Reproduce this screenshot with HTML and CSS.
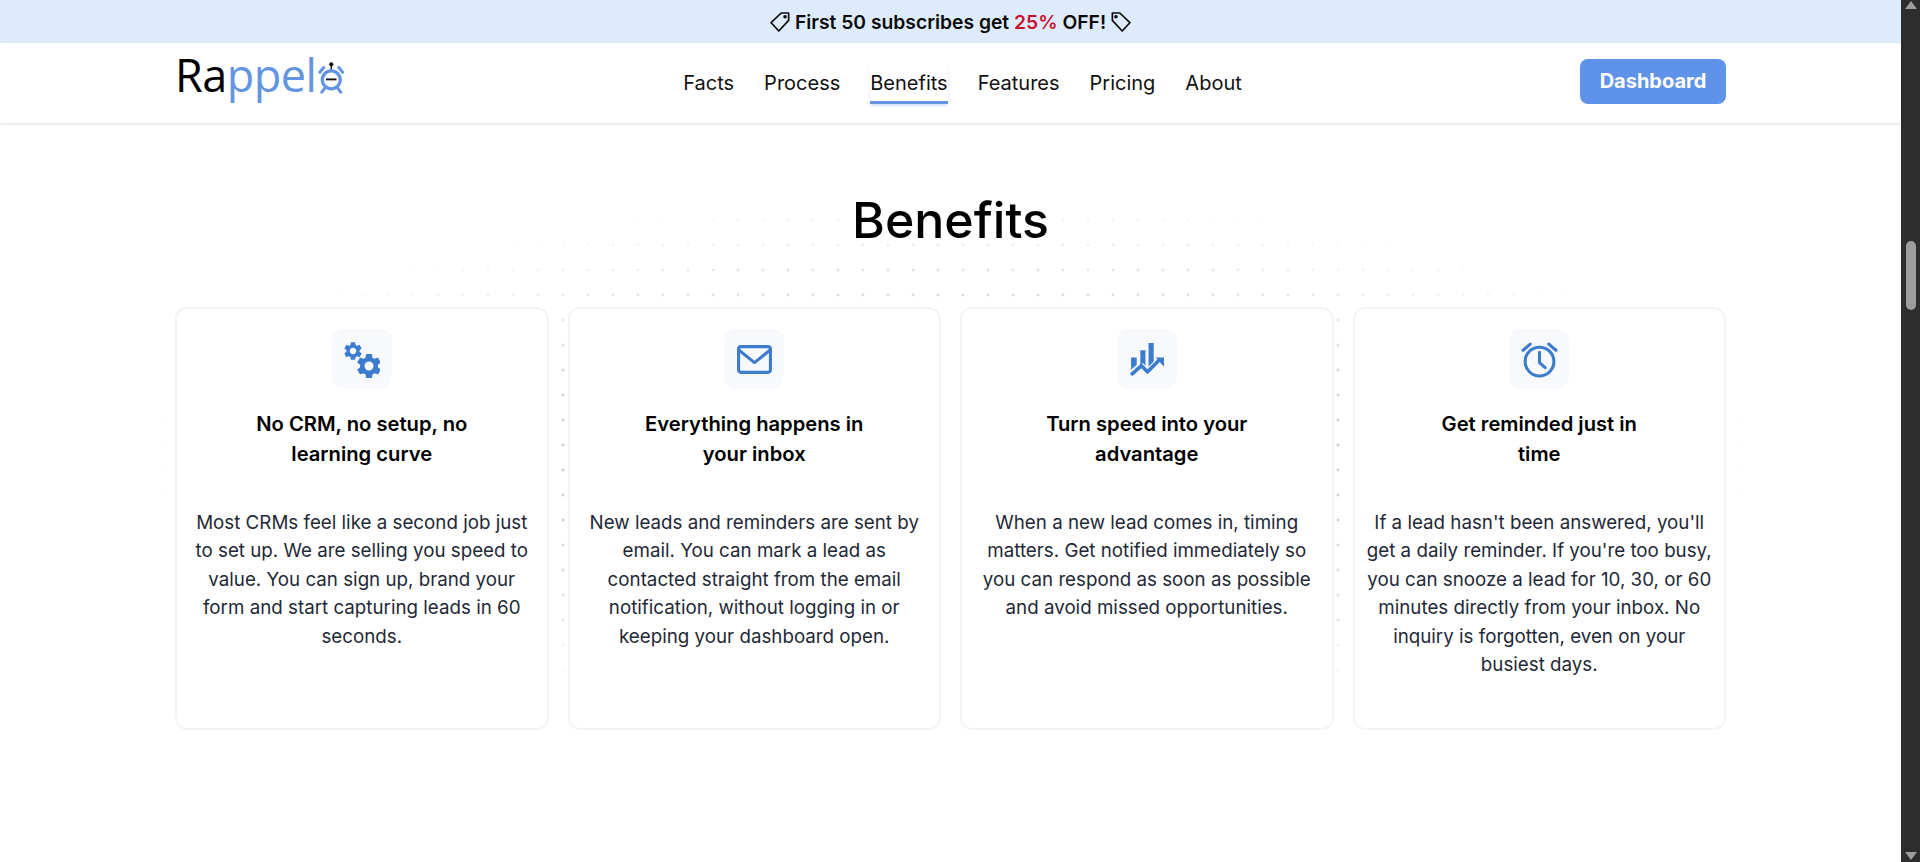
FILE: index.html
```html
<!DOCTYPE html>
<html lang="en">

<head>
    <meta charset="UTF-8">
    <title>Rappelo - Benefits</title>
    <link rel="stylesheet" href="styles.css">
</head>

<body>
    <svg class="defs" width="0" height="0">
        <symbol id="gear" viewBox="0 0 24 24">
            <path fill="currentColor" d="M19.14 12.94c.04-.3.06-.61.06-.94 0-.32-.02-.64-.07-.94l2.03-1.58c.18-.14.23-.41.12-.61l-1.92-3.32c-.12-.22-.37-.29-.59-.22l-2.39.96c-.5-.38-1.03-.7-1.62-.94l-.36-2.54c-.04-.24-.24-.41-.48-.41h-3.84c-.24 0-.43.17-.47.41l-.36 2.54c-.59.24-1.13.57-1.62.94l-2.39-.96c-.22-.08-.47 0-.59.22L2.74 8.87c-.12.21-.08.47.12.61l2.03 1.58c-.05.3-.09.63-.09.94s.02.64.07.94l-2.03 1.58c-.18.14-.23.41-.12.61l1.92 3.32c.12.22.37.29.59.22l2.39-.96c.5.38 1.03.7 1.62.94l.36 2.54c.05.24.24.41.48.41h3.84c.24 0 .44-.17.47-.41l.36-2.54c.59-.24 1.13-.56 1.62-.94l2.39.96c.22.08.47 0 .59-.22l1.92-3.32c.12-.22.07-.47-.12-.61l-2.01-1.58zM12 15.6c-1.98 0-3.6-1.62-3.6-3.6s1.62-3.6 3.6-3.6 3.6 1.62 3.6 3.6-1.62 3.6-3.6 3.6z" />
        </symbol>
    </svg>

    <div class="page">
        <div class="content">
            <div class="promo">
                <svg class="tag" viewBox="0 0 20 20" fill="none" stroke="currentColor" stroke-width="1.4" stroke-linejoin="round">
                    <path d="M11 2.500h6.200v6.200L9 17.500 2.600 10.600z" />
                    <circle cx="14.200" cy="5.600" r=".8" />
                </svg>
                <span>First 50 subscribes get <span class="promo-off">25%</span> OFF!</span>
                <svg class="tag" viewBox="0 0 20 20" fill="none" stroke="currentColor" stroke-width="1.4" stroke-linejoin="round">
                    <path d="M9 2.500H2.800v6.200L11 17.500l6.400-6.900z" />
                    <circle cx="5.800" cy="5.600" r=".8" />
                </svg>
            </div>

            <header class="topbar">
                <div class="topbar-inner">
                    <a class="logo" href="#">Ra<span class="logo-blue">ppel</span><svg class="logo-clock" viewBox="0 0 28 33">
                            <circle cx="14" cy="2.500" r="2.200" fill="#111" />
                            <path d="M14 4v5" stroke="#111" stroke-width="1.500" />
                            <circle cx="14" cy="19" r="9.500" fill="none" stroke="#6495e2" stroke-width="3.400" />
                            <path d="M8.500 18.500h11" stroke="#111" stroke-width="2" />
                            <path d="M2 11l4-5M26 11l-4-5M7 28l-3 4M21 28l3 4" stroke="#6495e2" stroke-width="3.200" stroke-linecap="round" />
                        </svg></a>
                    <nav class="nav">
                        <a href="#">Facts</a>
                        <a href="#">Process</a>
                        <a href="#" class="active">Benefits</a>
                        <a href="#">Features</a>
                        <a href="#">Pricing</a>
                        <a href="#">About</a>
                    </nav>
                    <a class="dash-btn" href="#">Dashboard</a>
                </div>
            </header>

            <section class="benefits">
                <div class="dots"></div>
                <h1>Benefits</h1>
                <div class="cards">
                    <div class="card">
                        <div class="card-icon">
                            <svg viewBox="0 0 37 37">
                                <use href="#gear" x="-1" y="-1" width="22" height="22" />
                                <use href="#gear" x="11" y="10" width="30" height="30" />
                            </svg>
                        </div>
                        <h3>No CRM, no setup, no learning curve</h3>
                        <p>Most CRMs feel like a second job just to set up. We are selling you speed to value. You can sign up, brand your form and start capturing leads in 60 seconds.</p>
                    </div>
                    <div class="card">
                        <div class="card-icon">
                            <svg viewBox="0 0 36 36" fill="none" stroke="currentColor" stroke-width="3" stroke-linejoin="round">
                                <rect x="2.500" y="5.500" width="31" height="25" rx="2.500" />
                                <path d="M3 9l15 12L33 9" />
                            </svg>
                        </div>
                        <h3>Everything happens in your inbox</h3>
                        <p>New leads and reminders are sent by email. You can mark a lead as contacted straight from the email notification, without logging in or keeping your dashboard open.</p>
                    </div>
                    <div class="card">
                        <div class="card-icon">
                            <svg viewBox="0 0 36 36" fill="currentColor">
                                <path d="M3 16h5.500v7L3 28zM12 9h5v15l-2.500-2.500-2.500 2zM20 2h5v18l-5 5zM27 16h8v9z" />
                                <path d="M3 33l10-9 6 6 12-12" fill="none" stroke="currentColor" stroke-width="3.400" />
                            </svg>
                        </div>
                        <h3>Turn speed into your advantage</h3>
                        <p>When a new lead comes in, timing matters. Get notified immediately so you can respond as soon as possible and avoid missed opportunities.</p>
                    </div>
                    <div class="card">
                        <div class="card-icon">
                            <svg viewBox="0 0 36 36" fill="none" stroke="currentColor" stroke-width="3" stroke-linecap="round" stroke-linejoin="round">
                                <circle cx="18" cy="20" r="14" />
                                <path d="M18 11v10l5.500 5M2 9l7-6M34 9l-7-6" />
                            </svg>
                        </div>
                        <h3>Get reminded just in time</h3>
                        <p>If a lead hasn't been answered, you'll get a daily reminder. If you're too busy, you can snooze a lead for 10, 30, or 60 minutes directly from your inbox. No inquiry is forgotten, even on your busiest days.</p>
                    </div>
                </div>
            </section>
        </div>

        <!-- browser scrollbar from the screenshot -->
        <div class="scrollbar">
            <span class="scroll-arrow"></span>
            <span class="scroll-thumb"></span>
            <span class="scroll-arrow down"></span>
        </div>
    </div>
</body>

</html>
```

FILE: styles.css
```css
* {
    box-sizing: border-box;
}

html,
body {
    margin: 0;
    height: 100%;
    overflow: hidden;
}

body {
    font-family: Inter, 'Liberation Sans', sans-serif;
    background: #fff;
    color: #000;
}

a {
    color: inherit;
    text-decoration: none;
}

.defs {
    position: absolute;
}

.page {
    display: flex;
    height: 862px;
}

.content {
    flex: 1;
    min-width: 0;
}

/* promo strip */
.promo {
    height: 43px;
    background: #deebfc;
    display: flex;
    align-items: center;
    justify-content: center;
    gap: 3px;
    font-size: 19.3px;
    font-weight: 600;
    color: #0b0b0b;
}

.promo-off {
    color: #c8102e;
}

.tag {
    width: 24px;
    height: 24px;
}

/* header */
.topbar {
    height: 80px;
    background: #fff;
    box-shadow: 0 1px 3px rgba(0, 0, 0, 0.14);
    position: relative;
    z-index: 2;
}

.topbar-inner {
    width: 1551px;
    height: 100%;
    margin: 0 auto;
    display: flex;
    align-items: center;
    justify-content: space-between;
}

.logo {
    width: 170px;
    display: flex;
    align-items: center;
    font-family: 'Open Sans', sans-serif;
    font-size: 45px;
    line-height: 60px;
    margin-top: -16px;
    letter-spacing: -0.5px;
}

.logo-blue {
    color: #6495e2;
}

.logo-clock {
    width: 28px;
    height: 33px;
    margin-left: 2px;
    margin-top: 5px;
}

.nav {
    display: flex;
    gap: 30px;
    font-size: 20px;
    color: #111;
    margin-top: 2px;
}

.nav a {
    padding: 6px 0 6px;
    border-bottom: 3px solid transparent;
}

.nav a.active {
    border-bottom-color: #6495e2;
    box-shadow: 0 2px 3px -1px rgba(100, 149, 226, 0.45);
}

.dash-btn {
    width: 146px;
    height: 45px;
    margin-top: -4px;
    border-radius: 8px;
    background: #5f93ea;
    color: #fff;
    font-size: 20px;
    font-weight: 700;
    display: flex;
    align-items: center;
    justify-content: center;
}

/* benefits section */
.benefits {
    position: relative;
    padding-top: 65px;
}

.dots {
    position: absolute;
    inset: 0 0 auto 0;
    height: 640px;
    background-image: radial-gradient(circle, #bcbcbc 1px, transparent 1.3px);
    background-size: 25px 25px;
    background-position: 0.5px 9.5px;
    -webkit-mask-image: radial-gradient(ellipse 830px 272px at 950px 337px, #000 45%, transparent 100%);
    mask-image: radial-gradient(ellipse 830px 272px at 950px 337px, #000 45%, transparent 100%);
}

.benefits h1 {
    position: relative;
    margin: 0 0 54px;
    text-align: center;
    font-size: 50px;
    line-height: 65px;
    font-weight: 500;
}

.cards {
    position: relative;
    width: 1551px;
    margin: 0 auto;
    display: grid;
    grid-template-columns: repeat(4, 1fr);
    gap: 19px;
}

.card {
    height: 423px;
    padding: 20px 12px 0;
    background: #fff;
    border: 2px solid #f3f4f6;
    border-radius: 12px;
    text-align: center;
}

.card-icon {
    width: 60px;
    height: 60px;
    margin: 0 auto 20px;
    border-radius: 12px;
    background: #f7f9fc;
    color: #3c7cce;
    display: flex;
    align-items: center;
    justify-content: center;
}

.card-icon svg {
    width: 37px;
    height: 37px;
}

.card h3 {
    max-width: 230px;
    margin: 0 auto 40px;
    font-size: 20.2px;
    line-height: 30px;
    font-weight: 600;
}

.card p {
    margin: 0;
    font-size: 18.75px;
    line-height: 28.4px;
    color: #1f2937;
}

/* scrollbar */
.scrollbar {
    width: 19px;
    background: #2d2d2d;
    display: flex;
    flex-direction: column;
    align-items: center;
    position: relative;
}

.scroll-arrow {
    width: 0;
    height: 0;
    margin-top: 1px;
    border-left: 6px solid transparent;
    border-right: 6px solid transparent;
    border-bottom: 8px solid #9d9d9d;
}

.scroll-arrow.down {
    position: absolute;
    bottom: 2px;
    border-bottom: 0;
    border-top: 8px solid #9d9d9d;
}

.scroll-thumb {
    position: absolute;
    top: 241px;
    width: 10px;
    height: 69px;
    border-radius: 5px;
    background: #9d9d9d;
}
```
